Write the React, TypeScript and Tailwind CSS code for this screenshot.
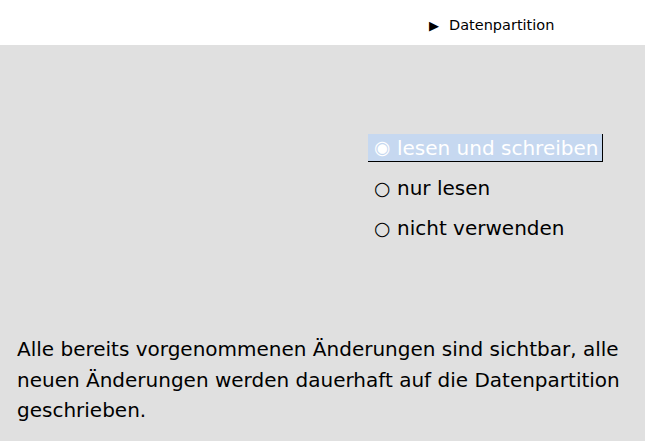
export default function App() {
  const options = [
    { label: 'lesen und schreiben', selected: true },
    { label: 'nur lesen', selected: false },
    { label: 'nicht verwenden', selected: false },
  ]
  return (
    <div className="w-[645px] h-[441px] overflow-hidden bg-[#e0e0e0] text-black font-['DejaVu_Sans',sans-serif] flex flex-col">
      <div className="h-[45px] bg-white flex items-center pl-[429px] pt-[7px] text-[14.5px] gap-[10px]">
        <span className="text-[13px]">▶</span>
        <span>Datenpartition</span>
      </div>
      <div className="flex flex-col items-start pl-[368px] pt-[89px] gap-[12px] text-[20px]">
        {options.map(o => (
          <div
            key={o.label}
            className={
              o.selected
                ? 'h-[28px] flex items-center pl-[6px] pr-[4px] bg-[#c6d8f0] text-white border-r border-b border-black'
                : 'h-[28px] flex items-center pl-[6px] pr-[4px]'
            }
          >
            <span className="w-[17px] text-[19px] leading-none">{o.selected ? '◉' : '○'}</span>
            <span className="ml-[6px] leading-none">{o.label}</span>
          </div>
        ))}
      </div>
      <p className="mt-[92px] px-[17px] text-[20px] leading-[30.5px]">
        Alle bereits vorgenommenen Änderungen sind sichtbar, alle neuen Änderungen werden dauerhaft auf die Datenpartition geschrieben.
      </p>
    </div>
  )
}
